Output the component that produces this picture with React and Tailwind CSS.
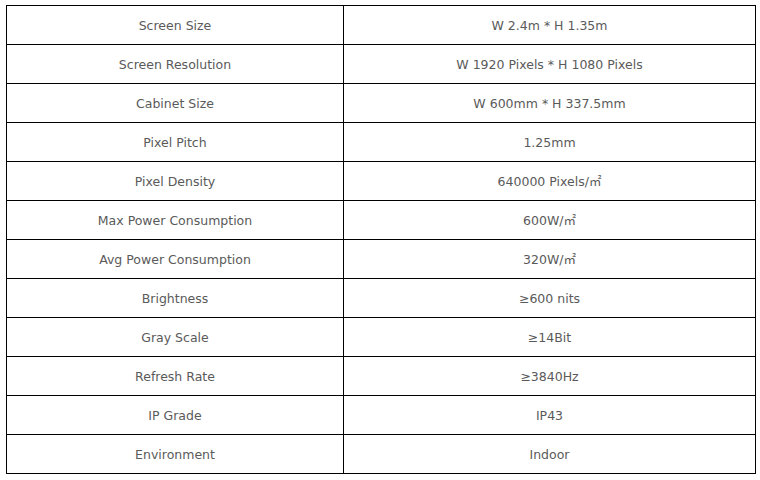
import React from "react";

const specs = [
    ["Screen Size", "W 2.4m * H 1.35m"],
    ["Screen Resolution", "W 1920 Pixels * H 1080 Pixels"],
    ["Cabinet Size", "W 600mm * H 337.5mm"],
    ["Pixel Pitch", "1.25mm"],
    ["Pixel Density", "640000 Pixels/㎡"],
    ["Max Power Consumption", "600W/㎡"],
    ["Avg Power Consumption", "320W/㎡"],
    ["Brightness", "≥600 nits"],
    ["Gray Scale", "≥14Bit"],
    ["Refresh Rate", "≥3840Hz"],
    ["IP Grade", "IP43"],
    ["Environment", "Indoor"],
];

const App = () => {
    return (
        <div className="bg-white w-[760px] h-[480px] pt-[5px] pl-[6px]">
            <table
                className="border-collapse w-[750px] text-[12.5px] text-[#5a5a5a]"
                style={{ fontFamily: '"DejaVu Sans", "Noto Sans CJK SC", sans-serif' }}
            >
                <tbody>
                    {specs.map(([label, value]) => (
                        <tr key={label} className="h-[39px]">
                            <td className="border border-black text-center w-[337px] pt-[2px] pb-0 px-0">{label}</td>
                            <td className="border border-black text-center pt-[2px] pb-0 px-0">{value}</td>
                        </tr>
                    ))}
                </tbody>
            </table>
        </div>
    );
};

export default App;
